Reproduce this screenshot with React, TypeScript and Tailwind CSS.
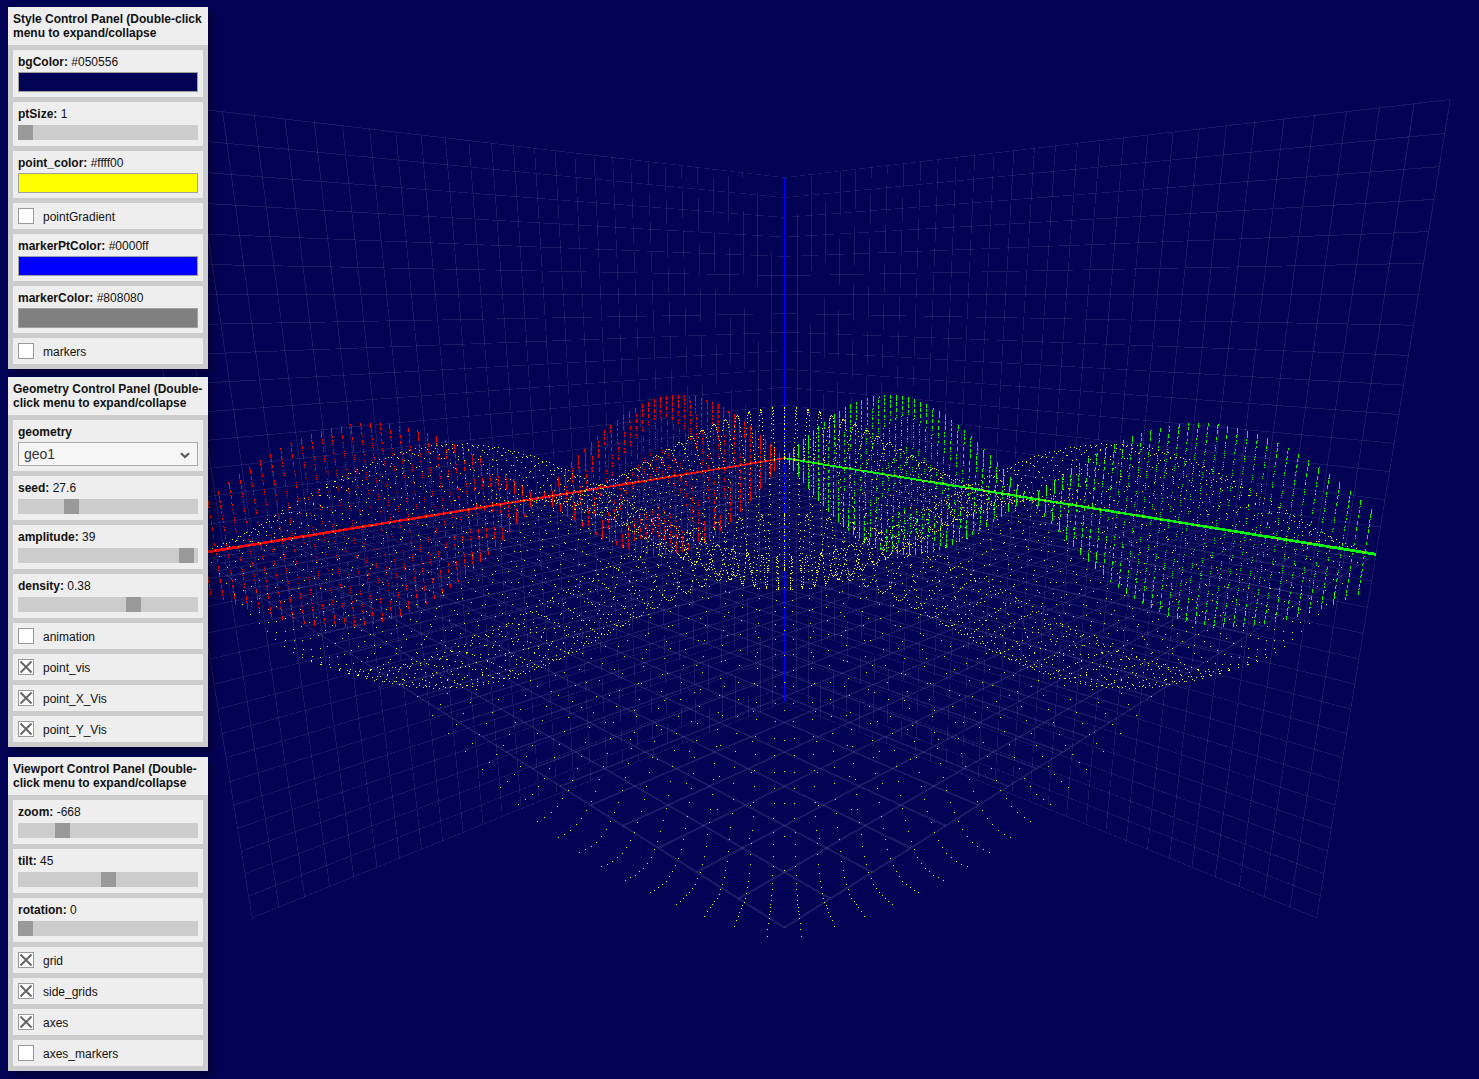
import React from "react";

// Camera: focal length, vertical centre, pitch, distance, eye offset, horizontal centre.
const FOCAL = 968.39;
const CY = 553.9;
const PITCH = 0.2611;
const DIST = 55.219;
const EYE = -5.4606;
const CX = 784.458;
const UNIT = 29.63;

const GRID_SIZE = 30;
const HALF = 15;

function project(x: number, y: number, z: number): [number, number, number] {
  const g = (x + y) * Math.SQRT1_2;
  const s = (y - x) * Math.SQRT1_2;
  const depth = DIST - g * Math.cos(PITCH) - z * Math.sin(PITCH);
  const down = EYE + g * Math.sin(PITCH) - z * Math.cos(PITCH);
  return [CX + (FOCAL * s) / depth, CY + (FOCAL * down) / depth, depth];
}

// A line in space, drawn as a quad whose width shrinks with distance.
function line(a: [number, number, number], b: [number, number, number], weight: number) {
  const [x0, y0, z0] = project(...a);
  const [x1, y1, z1] = project(...b);
  const len = Math.hypot(x1 - x0, y1 - y0);
  const nx = -(y1 - y0) / len;
  const ny = (x1 - x0) / len;
  const w0 = (weight * FOCAL) / (z0 * UNIT) / 2;
  const w1 = (weight * FOCAL) / (z1 * UNIT) / 2;
  const q = (v: number) => v.toFixed(3);
  return (
    `M${q(x0 + nx * w0)} ${q(y0 + ny * w0)}L${q(x1 + nx * w1)} ${q(y1 + ny * w1)}` +
    `L${q(x1 - nx * w1)} ${q(y1 - ny * w1)}L${q(x0 - nx * w0)} ${q(y0 - ny * w0)}Z`
  );
}

const GRID: string[] = [];
for (let i = 0; i <= GRID_SIZE; i++) {
  const h = i - HALF;
  GRID.push(
    line([i, 0, 0], [i, GRID_SIZE, 0], 1),
    line([0, i, 0], [GRID_SIZE, i, 0], 1),
    line([i, 0, -HALF], [i, 0, HALF], 1),
    line([0, 0, h], [GRID_SIZE, 0, h], 1),
    line([0, i, -HALF], [0, i, HALF], 1),
    line([0, 0, h], [0, GRID_SIZE, h], 1),
  );
}

const AMPLITUDE = 4.09;
const FREQUENCY = 0.0754;
const DENSITY = 0.38;
const COUNT = 79;

// One-pixel points of the wave surface, placed in space by `place`.
function dots(place: (x: number, y: number, z: number) => [number, number, number]) {
  const seen = new Set<string>();
  for (let i = 0; i < COUNT; i++) {
    for (let j = 0; j < COUNT; j++) {
      const sign = (i + j) % 2 ? -1 : 1;
      const z = sign * AMPLITUDE * Math.sin(FREQUENCY * i) * Math.sin(FREQUENCY * j);
      const [px, py] = project(...place(i * DENSITY, j * DENSITY, z));
      seen.add(`M${Math.floor(px)} ${Math.floor(py)}h1v1h-1z`);
    }
  }
  return [...seen].join("");
}

const SURFACE = dots((x, y, z) => [x, y, z]);
const ON_X = dots((x, _y, z) => [x, 0, z]);
const ON_Y = dots((_x, y, z) => [0, y, z]);

function Scene() {
  return (
    <svg className="absolute inset-0" width="1479" height="1079" shapeRendering="crispEdges">
      {GRID.map((d, i) => (
        <path key={i} d={d} fill="#ffffff" fillOpacity={0.095} />
      ))}
      <path d={line([0, 0, -HALF], [0, 0, HALF], 3)} fill="#0000ff" />
      <path d={ON_X} fill="#ff0000" />
      <path d={ON_Y} fill="#00ff00" />
      <path d={line([0, 0, 0], [GRID_SIZE, 0, 0], 3)} fill="#ff0000" />
      <path d={line([0, 0, 0], [0, GRID_SIZE, 0], 3)} fill="#00ff00" />
      <path d={SURFACE} fill="#ffff00" />
    </svg>
  );
}

function Control({ children }: { children: React.ReactNode }) {
  return <div className="bg-[#eeeeee] p-[5px]">{children}</div>;
}

function Label({ name, value }: { name: string; value?: string }) {
  return (
    <div className="h-[14px] leading-[14px] whitespace-pre">
      <b>{name}</b>
      {value ? " " + value : ""}
    </div>
  );
}

function Color({ name, value, swatch }: { name: string; value: string; swatch: string }) {
  return (
    <Control>
      <Label name={name + ":"} value={value} />
      <div className="mt-[3px] h-5 border border-[#a0a0a0]" style={{ backgroundColor: swatch }} />
    </Control>
  );
}

function Range({ name, value, pos }: { name: string; value: string; pos: number }) {
  return (
    <Control>
      <Label name={name + ":"} value={value} />
      <div className="mt-1 mb-px h-[15px] bg-[#cccccc]">
        <div className="h-[15px] w-[15px] bg-[#999999]" style={{ marginLeft: pos }} />
      </div>
    </Control>
  );
}

function Check({ name, on }: { name: string; on?: boolean }) {
  return (
    <Control>
      <div className="flex h-4 items-center gap-[9px]">
        <div className="h-4 w-4 border border-[#999999] bg-white">
          {on && (
            <svg width="14" height="14" viewBox="0 0 14 14">
              <path d="M1.5 1.5L12.5 12.5M12.5 1.5L1.5 12.5" stroke="#666666" strokeWidth="2" />
            </svg>
          )}
        </div>
        <span className="relative top-px leading-[14px]">{name}</span>
      </div>
    </Control>
  );
}

function Panel({ title, children }: { title: string; children: React.ReactNode }) {
  return (
    <section className="w-[200px] bg-[#cccccc] shadow-[5px_5px_8px_rgba(0,0,0,0.35)]">
      <h2 className="bg-[#eeeeee] p-[5px] leading-[14px] font-bold">{title}</h2>
      <div className="flex flex-col gap-[5px] p-[5px]">{children}</div>
    </section>
  );
}

export default function App() {
  return (
    <main className="relative h-[1079px] w-[1479px] overflow-hidden bg-[#030355] font-['Liberation_Sans',Arial,sans-serif] text-[12px] text-[#111111]">
      <Scene />
      <div className="relative flex flex-col pt-[7px] pl-2">
        <Panel title="Style Control Panel (Double-click menu to expand/collapse">
          <Color name="bgColor" value="#050556" swatch="#030355" />
          <Range name="ptSize" value="1" pos={0} />
          <Color name="point_color" value="#ffff00" swatch="#ffff00" />
          <Check name="pointGradient" />
          <Color name="markerPtColor" value="#0000ff" swatch="#0000ff" />
          <Color name="markerColor" value="#808080" swatch="#808080" />
          <Check name="markers" />
        </Panel>
        <div className="mt-2">
          <Panel title="Geometry Control Panel (Double-click menu to expand/collapse">
            <Control>
              <Label name="geometry" />
              <div className="mt-[3px] flex h-6 items-center justify-between border border-[#aaaaaa] bg-[#f5f5f5] pr-[7px] pl-[5px] text-[14px] text-[#333333]">
                <span>geo1</span>
                <svg className="relative top-px" width="10" height="7" viewBox="0 0 10 7">
                  <path d="M1 1.2L5 5L9 1.2" fill="none" stroke="#555555" strokeWidth="2" />
                </svg>
              </div>
            </Control>
            <Range name="seed" value="27.6" pos={46} />
            <Range name="amplitude" value="39" pos={161} />
            <Range name="density" value="0.38" pos={108} />
            <Check name="animation" />
            <Check name="point_vis" on />
            <Check name="point_X_Vis" on />
            <Check name="point_Y_Vis" on />
          </Panel>
        </div>
        <div className="mt-2.5">
          <Panel title="Viewport Control Panel (Double-click menu to expand/collapse">
            <Range name="zoom" value="-668" pos={37} />
            <Range name="tilt" value="45" pos={83} />
            <Range name="rotation" value="0" pos={0} />
            <Check name="grid" on />
            <Check name="side_grids" on />
            <Check name="axes" on />
            <Check name="axes_markers" />
          </Panel>
        </div>
      </div>
    </main>
  );
}
